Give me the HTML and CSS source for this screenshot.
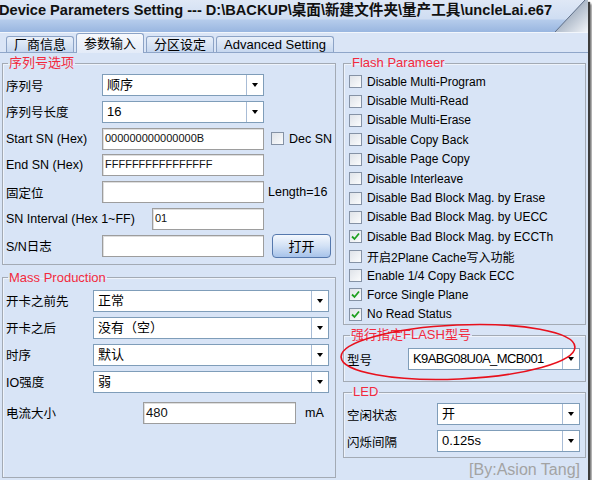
FILE: index.html
```html
<!DOCTYPE html>
<html lang="zh">
<head>
    <meta charset="UTF-8">
    <title>Device Parameters Setting</title>
    <link rel="stylesheet" href="styles.css">
</head>
<body>
<div class="window">
    <div class="titlebar">
        <span class="title">Device Parameters Setting --- D:\BACKUP\桌面\新建文件夹\量产工具\uncleLai.e67</span>
        <svg class="curl" width="33" height="32" viewBox="0 0 33 32">
            <defs>
                <linearGradient id="fold" x1="0" y1="0" x2="1" y2="1">
                    <stop offset="0" stop-color="#6d7d95"/>
                    <stop offset="0.45" stop-color="#aab6c6"/>
                    <stop offset="1" stop-color="#f2f5f9"/>
                </linearGradient>
            </defs>
            <polygon points="0,32 30,0 33,0 33,32" fill="url(#fold)"/>
            <line x1="0" y1="32" x2="30" y2="0" stroke="#5f6f88" stroke-width="1"/>
        </svg>
    </div>

    <div class="tabs">
        <div class="tab">厂商信息</div>
        <div class="tab active">参数输入</div>
        <div class="tab">分区设定</div>
        <div class="tab wide">Advanced Setting</div>
    </div>

    <div class="content">
        <div class="col-left">
            <fieldset class="group sn-group">
                <legend>序列号选项</legend>
                <div class="row">
                    <label class="lbl w96">序列号</label>
                    <div class="combo w162"><span class="val">顺序</span><span class="drop"></span></div>
                </div>
                <div class="row">
                    <label class="lbl w96">序列号长度</label>
                    <div class="combo w162"><span class="val">16</span><span class="drop"></span></div>
                </div>
                <div class="row">
                    <label class="lbl w96">Start SN (Hex)</label>
                    <div class="field w162">000000000000000B</div>
                    <span class="cb dec"></span><span class="side">Dec SN</span>
                </div>
                <div class="row">
                    <label class="lbl w96">End SN (Hex)</label>
                    <div class="field w162">FFFFFFFFFFFFFFFF</div>
                </div>
                <div class="row">
                    <label class="lbl w96">固定位</label>
                    <div class="field w162"></div>
                    <span class="side len">Length=16</span>
                </div>
                <div class="row">
                    <label class="lbl w146">SN Interval (Hex 1~FF)</label>
                    <div class="field w112">01</div>
                </div>
                <div class="row">
                    <label class="lbl w96">S/N日志</label>
                    <div class="field w162"></div>
                    <button class="open-btn">打开</button>
                </div>
            </fieldset>

            <fieldset class="group mp-group">
                <legend>Mass Production</legend>
                <div class="row">
                    <label class="lbl w87">开卡之前先</label>
                    <div class="combo w236"><span class="val">正常</span><span class="drop"></span></div>
                </div>
                <div class="row">
                    <label class="lbl w87">开卡之后</label>
                    <div class="combo w236"><span class="val">没有（空）</span><span class="drop"></span></div>
                </div>
                <div class="row">
                    <label class="lbl w87">时序</label>
                    <div class="combo w236"><span class="val">默认</span><span class="drop"></span></div>
                </div>
                <div class="row">
                    <label class="lbl w87">IO强度</label>
                    <div class="combo w236"><span class="val">弱</span><span class="drop"></span></div>
                </div>
                <div class="row current">
                    <label class="lbl w137">电流大小</label>
                    <div class="field w153 big">480</div>
                    <span class="side unit">mA</span>
                </div>
            </fieldset>
        </div>

        <div class="col-right">
            <fieldset class="group flash-group">
                <legend>Flash Parameer</legend>
                <div class="check"><span class="cb"></span>Disable Multi-Program</div>
                <div class="check"><span class="cb"></span>Disable Multi-Read</div>
                <div class="check"><span class="cb"></span>Disable Multi-Erase</div>
                <div class="check"><span class="cb"></span>Disable Copy Back</div>
                <div class="check"><span class="cb"></span>Disable Page Copy</div>
                <div class="check"><span class="cb"></span>Disable Interleave</div>
                <div class="check"><span class="cb"></span>Disable Bad Block Mag. by Erase</div>
                <div class="check"><span class="cb"></span>Disable Bad Block Mag. by UECC</div>
                <div class="check"><span class="cb on"><svg width="11" height="11" viewBox="0 0 11 11"><path d="M2 5.5 L4.5 8 L9 2.5" fill="none" stroke="#20a020" stroke-width="1.8"/></svg></span>Disable Bad Block Mag. by ECCTh</div>
                <div class="check"><span class="cb"></span>开启2Plane Cache写入功能</div>
                <div class="check"><span class="cb"></span>Enable 1/4 Copy Back ECC</div>
                <div class="check"><span class="cb on"><svg width="11" height="11" viewBox="0 0 11 11"><path d="M2 5.5 L4.5 8 L9 2.5" fill="none" stroke="#20a020" stroke-width="1.8"/></svg></span>Force Single Plane</div>
                <div class="check"><span class="cb on"><svg width="11" height="11" viewBox="0 0 11 11"><path d="M2 5.5 L4.5 8 L9 2.5" fill="none" stroke="#20a020" stroke-width="1.8"/></svg></span>No Read Status</div>
            </fieldset>

            <fieldset class="group model-group">
                <legend>强行指定FLASH型号</legend>
                <div class="row">
                    <label class="lbl w61">型号</label>
                    <div class="combo w172"><span class="val narrow">K9ABG08U0A_MCB001</span><span class="drop"></span></div>
                </div>
            </fieldset>

            <fieldset class="group led-group">
                <legend>LED</legend>
                <div class="row">
                    <label class="lbl w90">空闲状态</label>
                    <div class="combo w143"><span class="val">开</span><span class="drop"></span></div>
                </div>
                <div class="row">
                    <label class="lbl w90">闪烁间隔</label>
                    <div class="combo w143"><span class="val">0.125s</span><span class="drop"></span></div>
                </div>
            </fieldset>

            <div class="credit">[By:Asion Tang]</div>
        </div>
    </div>

    <!-- red marker drawn over the flash model box -->
    <svg class="ring" width="250" height="74" viewBox="0 0 250 74">
        <ellipse cx="122" cy="35" rx="117" ry="27" fill="none" stroke="#e8101c" stroke-width="1.6" transform="rotate(-2.5 122 35)"/>
    </svg>
</div>
</body>
</html>
```

FILE: styles.css
```css
html, body {
    margin: 0;
    padding: 0;
}
body {
    font-family: "Liberation Sans", "Noto Sans CJK SC", sans-serif;
    font-size: 12.5px;
    color: #000;
    background: #fff;
}
.window {
    position: relative;
    width: 588px;
    height: 480px;
    display: flex;
    flex-direction: column;
    background: #d8e4f6;
    overflow: hidden;
    box-shadow: 2px 2px 1px #3c3c3c, 4px 4px 2px rgba(0, 0, 0, 0.45);
}

/* title bar */
.titlebar {
    height: 32px;
    flex: none;
    display: flex;
    background: linear-gradient(#dfe8f6 0, #cfddf2 58%, #b4cbeb 64%, #99b6e0 100%);
}
.title {
    font-weight: bold;
    font-size: 14.6px;
    line-height: 17px;
    margin: 2px 0 0 -1px;
    white-space: nowrap;
    color: #111;
}
.curl {
    margin-left: auto;
    flex: none;
}

/* tabs */
.tabs {
    height: 19px;
    flex: none;
    display: flex;
    align-items: flex-end;
    gap: 2px;
    padding-left: 6px;
    background: #dae5f6;
    border-top: 1px solid #f2f6fc;
    border-bottom: 1px solid #8fa6c9;
    box-sizing: content-box;
}
.tab {
    width: 68px;
    height: 16px;
    box-sizing: border-box;
    border: 1px solid #8ca3c6;
    border-bottom: none;
    border-radius: 3px 3px 0 0;
    background: linear-gradient(#e9f0fa, #c6d7ef);
    font-size: 13px;
    line-height: 15px;
    text-align: center;
}
.tab.wide {
    width: 118px;
}
.tab.active {
    height: 20px;
    margin-bottom: -1px;
    background: linear-gradient(#f7f9fd, #e3ebf8);
    line-height: 19px;
}

/* body columns */
.content {
    flex: 1;
    display: flex;
}
.col-left {
    width: 334px;
    padding: 3px 4px 2px 2px;
    display: flex;
    flex-direction: column;
}
.col-right {
    width: 243px;
    padding: 3px 2px 0 3px;
    display: flex;
    flex-direction: column;
}

/* group boxes */
.group {
    margin: 0;
    border: 1px solid #a3aab4;
    box-shadow: inset 1px 1px 0 #eef3fb;
    min-width: 0;
    display: flex;
    flex-direction: column;
}
.group legend {
    color: #f22a3e;
    font-size: 13px;
    line-height: 14px;
    padding: 0 1px;
    margin-left: 2px;
}
.sn-group {
    padding: 4px 4px 7px 3px;
    gap: 4.8px;
}
.mp-group {
    margin-top: 6px;
    flex: 1;
    padding: 5px 4px 0 3px;
    gap: 5px;
}
.flash-group {
    padding: 2px 4px 0 5px;
}
.flash-group legend {
    margin-left: 2px;
}
.model-group legend {
    margin-left: 3px;
}
.led-group legend {
    margin-left: 5px;
}
.model-group {
    margin-top: 3px;
    padding: 6px 4px 11px 3px;
}
.led-group {
    margin-top: 3px;
    padding: 4px 4px 5px 3px;
    gap: 5px;
}

/* form rows */
.row {
    height: 22px;
    display: flex;
    align-items: center;
}
.row.current {
    margin-top: 4px;
}
.lbl {
    flex: none;
    box-sizing: border-box;
    white-space: nowrap;
}
.w61 { width: 61px; }
.w87 { width: 87px; }
.w90 { width: 90px; }
.w96 { width: 96px; }
.w137 { width: 137px; }
.w146 { width: 146px; }
.w112 { width: 112px; }
.w143 { width: 143px; }
.w153 { width: 153px; }
.w162 { width: 162px; }
.w172 { width: 172px; }
.w236 { width: 236px; }

.combo {
    flex: none;
    height: 22px;
    box-sizing: border-box;
    border: 1px solid #7f9db9;
    background: #fff;
    display: flex;
}
.combo .val {
    flex: 1;
    padding-left: 4px;
    font-size: 13px;
    line-height: 20px;
    white-space: nowrap;
    overflow: hidden;
}
.combo .val.narrow {
    letter-spacing: -0.6px;
}
.combo .drop {
    width: 16px;
    border-left: 1px solid #a8bcd6;
    display: flex;
    align-items: center;
    justify-content: center;
}
.combo .drop::after {
    content: "";
    border-left: 3.5px solid transparent;
    border-right: 3.5px solid transparent;
    border-top: 4px solid #000;
}

.field {
    flex: none;
    height: 22px;
    box-sizing: border-box;
    border: 1px solid #9d9d9d;
    box-shadow: inset 1px 1px 0 #dedede;
    background: #fff;
    font-size: 11px;
    line-height: 13px;
    padding: 3px 2px 0;
    color: #111;
}
.field.big {
    font-size: 13px;
    line-height: 15px;
    padding-top: 2px;
}
.side {
    white-space: nowrap;
}
.len {
    margin-left: 4px;
}
.unit {
    margin-left: 9px;
}
.open-btn {
    margin-left: 8px;
    width: 60px;
    height: 24px;
    border: 1px solid #5578ad;
    border-radius: 4px;
    background: linear-gradient(#f4f8fe, #d2e1f5 50%, #a7c3ea);
    font-family: inherit;
    font-size: 13px;
    padding: 0;
}

/* checkboxes */
.cb {
    flex: none;
    width: 13px;
    height: 13px;
    box-sizing: border-box;
    border: 1px solid #8592a5;
    background: linear-gradient(135deg, #dfe3e9, #fbfcfd);
    display: flex;
    align-items: center;
    justify-content: center;
}
.cb.dec {
    margin-left: 7px;
    margin-right: 5px;
}
.check {
    height: 19.4px;
    display: flex;
    align-items: center;
    gap: 5px;
    font-size: 12px;
    white-space: nowrap;
}

.credit {
    margin-top: 4px;
    padding-right: 6px;
    text-align: right;
    color: #a3a3a3;
    font-size: 16px;
    line-height: 16px;
}

.ring {
    position: absolute;
    left: 336px;
    top: 317px;
}
```
